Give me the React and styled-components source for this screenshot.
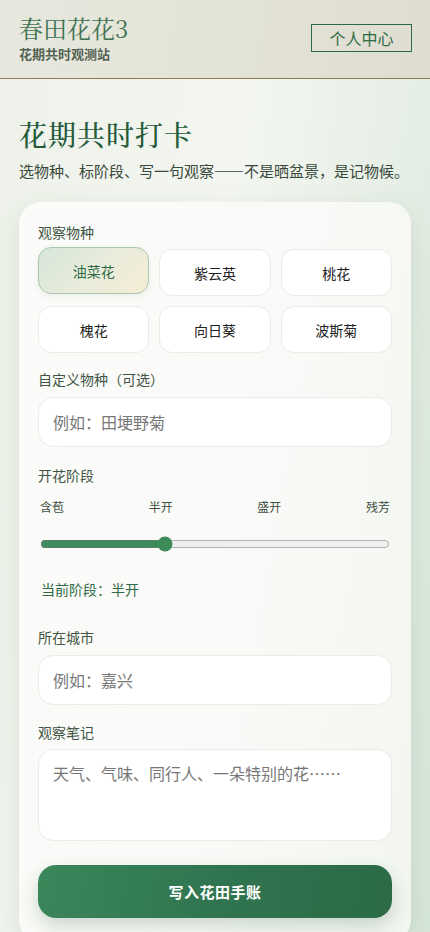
import React, { useState } from "react";
import styled, { createGlobalStyle } from "styled-components";

const Global = createGlobalStyle`
  * { box-sizing: border-box; }
  html, body { margin: 0; padding: 0; }
  body {
    font-family: "Noto Sans CJK SC", "Noto Sans", sans-serif;
    background: #eef2ea;
    color: #222;
  }
`;

const Page = styled.div`
  min-height: 932px;
  background: linear-gradient(100deg, #eef2ea 0%, #f3f6f0 45%, #e2ece2 80%, #d5e6d9 100%);
`;

const Header = styled.header`
  display: flex;
  justify-content: space-between;
  align-items: flex-start;
  padding: 14px 18px 0 19px;
  height: 79px;
  background: linear-gradient(100deg, #e7e8de 0%, #e3e2d6 60%, #dfddd0 100%);
  border-bottom: 1px solid #8c7c52;
`;

const Brand = styled.div`
  display: flex;
  flex-direction: column;
`;

const BrandName = styled.div`
  font-family: "Noto Serif CJK SC", "Liberation Serif", serif;
  font-size: 24px;
  line-height: 28px;
  color: #3e7353;
  font-weight: 400;
`;

const BrandSub = styled.div`
  font-size: 13px;
  line-height: 18px;
  font-weight: 700;
  color: #536253;
  margin-top: 3px;
`;

const ProfileButton = styled.button`
  margin-top: 10px;
  width: 101px;
  height: 28px;
  background: transparent;
  border: 1.5px solid #2d6b45;
  color: #2d6b45;
  font-family: inherit;
  font-size: 16px;
  line-height: 1;
  padding: 0;
  display: flex;
  align-items: center;
  justify-content: center;
`;

const Main = styled.main`
  padding: 36px 19px 0;
`;

const Title = styled.h1`
  margin: 0;
  font-family: "Noto Serif CJK SC", "Liberation Serif", serif;
  font-size: 28px;
  line-height: 38px;
  font-weight: 500;
  color: #255b3b;
  letter-spacing: 1px;
`;

const Lead = styled.p`
  margin: 8px 0 0;
  font-size: 15px;
  line-height: 20px;
  color: #38483b;
  white-space: nowrap;
`;

const Dash = styled.span`
  font-feature-settings: "fwid" 1;
`;

const Card = styled.section`
  margin-top: 21px;
  background: linear-gradient(100deg, #fbfbf9 0%, #f9faf7 60%, #f2f5f0 100%);
  border-radius: 22px;
  padding: 21px 19px 24px;
  box-shadow: 0 10px 30px rgba(60, 90, 60, 0.12), 0 1px 3px rgba(0, 0, 0, 0.04);
  display: flex;
  flex-direction: column;
`;

const Field = styled.div`
  display: flex;
  flex-direction: column;
  margin-bottom: ${(p) => p.$mb ?? 20}px;
`;

const Label = styled.label`
  font-size: 14px;
  line-height: 18px;
  color: #3f5444;
  margin-bottom: ${(p) => p.$mb ?? 7}px;
`;

const ChipGrid = styled.div`
  display: grid;
  grid-template-columns: repeat(3, 1fr);
  gap: 10px;
`;

const Chip = styled.button`
  height: 47px;
  border-radius: 13px;
  font-family: inherit;
  font-size: 14px;
  padding: 0;
  cursor: pointer;
  border: 1px solid ${(p) => (p.$active ? "#a9c8ae" : "#ebebe7")};
  background: ${(p) =>
    p.$active ? "linear-gradient(135deg, #d6e6d9 0%, #e9ecdc 50%, #f5ecd5 100%)" : "#ffffff"};
  color: ${(p) => (p.$active ? "#2e6b46" : "#222")};
  transform: ${(p) => (p.$active ? "translateY(-2px)" : "none")};
  box-shadow: ${(p) => (p.$active ? "0 2px 6px rgba(60,100,60,0.08)" : "none")};
`;

const TextInput = styled.input`
  height: 50px;
  border-radius: 15px;
  border: 1px solid #ebebe7;
  background: #fff;
  padding: 0 14px;
  font-family: inherit;
  font-size: 16px;
  color: #222;
  outline: none;
  &::placeholder { color: #777; }
`;

const TextArea = styled.textarea`
  height: 92px;
  border-radius: 15px;
  border: 1px solid #ebebe7;
  background: #fff;
  padding: 12px 14px;
  font-family: inherit;
  font-size: 16px;
  line-height: 22px;
  color: #222;
  outline: none;
  resize: none;
  &::placeholder { color: #777; }
`;

const StageRow = styled.div`
  display: flex;
  justify-content: space-between;
  padding: 0 2px;
  font-size: 12px;
  line-height: 18px;
  color: #3e4e41;
  margin-top: 7px;
`;

const Range = styled.input`
  width: auto;
  margin: 19px 2px 0;
  height: 18px;
  accent-color: #3d8a5a;
`;

const Current = styled.div`
  margin-top: 27px;
  font-size: 14px;
  line-height: 18px;
  color: #2e6b46;
  padding-left: 3px;
`;

const Submit = styled.button`
  margin-top: 0;
  height: 53px;
  border: none;
  border-radius: 18px;
  background: linear-gradient(100deg, #3a875a 0%, #307550 50%, #2b6a45 100%);
  color: #fff;
  font-family: inherit;
  font-size: 15px;
  font-weight: 700;
  letter-spacing: 0.5px;
  box-shadow: 0 8px 18px rgba(40, 90, 60, 0.22);
`;

const SPECIES = ["油菜花", "紫云英", "桃花", "槐花", "向日葵", "波斯菊"];
const STAGES = ["含苞", "半开", "盛开", "残芳"];

export default function App() {
  const [species, setSpecies] = useState("油菜花");
  const [stage, setStage] = useState(35);
  const stageName = STAGES[Math.min(3, Math.floor(stage / 25))];

  return (
    <Page>
      <Global />
      <Header>
        <Brand>
          <BrandName>春田花花3</BrandName>
          <BrandSub>花期共时观测站</BrandSub>
        </Brand>
        <ProfileButton>个人中心</ProfileButton>
      </Header>
      <Main>
        <Title>花期共时打卡</Title>
        <Lead>
          选物种、标阶段、写一句观察<Dash>——</Dash>不是晒盆景，是记物候。
        </Lead>
        <Card>
          <Field $mb={17}>
            <Label $mb={8}>观察物种</Label>
            <ChipGrid>
              {SPECIES.map((s) => (
                <Chip key={s} $active={s === species} onClick={() => setSpecies(s)}>
                  {s}
                </Chip>
              ))}
            </ChipGrid>
          </Field>
          <Field $mb={19}>
            <Label $mb={9}>自定义物种（可选）</Label>
            <TextInput placeholder="例如：田埂野菊" />
          </Field>
          <Field $mb={30}>
            <Label $mb={7}>开花阶段</Label>
            <StageRow>
              {STAGES.map((s) => (
                <span key={s}>{s}</span>
              ))}
            </StageRow>
            <Range
              type="range"
              min={0}
              max={100}
              value={stage}
              onChange={(e) => setStage(Number(e.target.value))}
            />
            <Current>当前阶段：{stageName}</Current>
          </Field>
          <Field $mb={18}>
            <Label $mb={9}>所在城市</Label>
            <TextInput placeholder="例如：嘉兴" />
          </Field>
          <Field $mb={24}>
            <Label $mb={8}>观察笔记</Label>
            <TextArea placeholder="天气、气味、同行人、一朵特别的花……" />
          </Field>
          <Submit>写入花田手账</Submit>
        </Card>
      </Main>
    </Page>
  );
}
